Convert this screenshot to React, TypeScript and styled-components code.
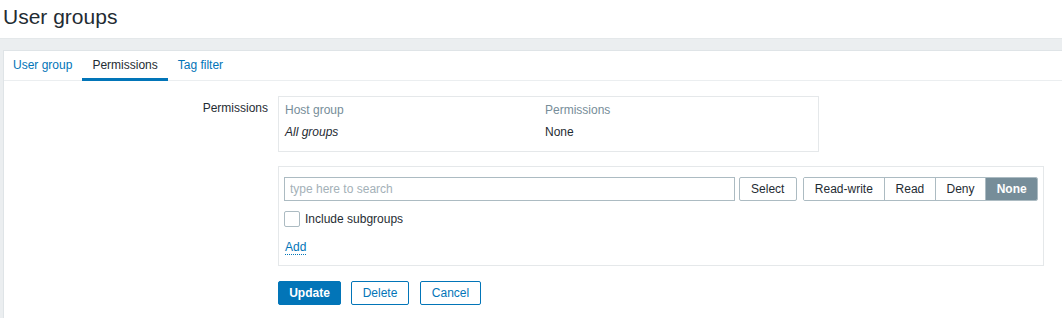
import React from 'react';
import styled, { createGlobalStyle } from 'styled-components';

const GlobalStyle = createGlobalStyle`
  html, body {
    margin: 0;
    padding: 0;
    background: #ffffff;
  }
  body {
    font-family: "Liberation Sans", Arial, sans-serif;
    font-size: 12px;
    color: #1f2c33;
  }
  * { box-sizing: border-box; }
`;

const Page = styled.div`
  display: flex;
  flex-direction: column;
  min-height: 318px;
`;

const Header = styled.header`
  height: 38px;
  padding-left: 3px;
  display: flex;
  align-items: center;
`;

const Title = styled.h1`
  margin: 0;
  font-size: 21px;
  font-weight: normal;
  line-height: 24px;
  color: #1f2c33;
  margin-top: -5px;
`;

const Main = styled.main`
  flex: 1;
  display: flex;
  background: #ebeef0;
  border-top: 1px solid #e4e8ea;
  padding: 11px 0 0 3px;
`;

const Card = styled.section`
  flex: 1;
  background: #ffffff;
  border: 1px solid #dfe4e7;
  border-right: none;
  border-bottom: none;
`;

const TabNav = styled.nav`
  display: flex;
  height: 30px;
  border-bottom: 1px solid #ebeef0;
`;

const Tab = styled.a<{ $active?: boolean }>`
  display: flex;
  align-items: center;
  height: 30px;
  margin-bottom: -1px;
  padding: 0 10px;
  border-bottom: 3px solid ${p => (p.$active ? '#0275b8' : 'transparent')};
  color: ${p => (p.$active ? '#1f2c33' : '#0275b8')};
  text-decoration: none;
  cursor: pointer;
  &:first-child { padding-left: 9px; }
`;

const Form = styled.div`
  display: grid;
  grid-template-columns: 264px 1fr;
  column-gap: 10px;
  row-gap: 14px;
  padding-top: 15px;
  align-items: start;
`;

const Label = styled.label`
  text-align: right;
  padding-top: 5px;
  line-height: 14px;
`;

const TableBox = styled.div`
  width: 541px;
  border: 1px solid #e5e8ea;
  display: grid;
  grid-template-columns: 260px 1fr;
  row-gap: 8px;
  padding: 6px 6px 12px;
  line-height: 14px;
`;

const HeadCell = styled.div`
  color: #768d99;
`;

const Cell = styled.div<{ $italic?: boolean }>`
  font-style: ${p => (p.$italic ? 'italic' : 'normal')};
`;

const EditBox = styled.div`
  width: 766px;
  border: 1px solid #e5e8ea;
  padding: 10px 5px 10px;
  display: flex;
  flex-direction: column;
`;

const SearchRow = styled.div`
  display: flex;
  align-items: center;
`;

const SearchInput = styled.input`
  width: 454px;
  height: 24px;
  border: 1px solid #acbbc2;
  padding: 0 5px;
  font-family: inherit;
  font-size: 12px;
  color: #1f2c33;
  outline: none;
  &::placeholder { color: #a4b1b8; }
`;

const PlainButton = styled.button`
  height: 24px;
  margin-left: 4px;
  padding: 0 10px;
  width: 58px;
  border: 1px solid #acbbc2;
  border-radius: 2px;
  background: #ffffff;
  color: #1f2c33;
  font-family: inherit;
  font-size: 12px;
`;

const Segmented = styled.div`
  display: flex;
  margin-left: 6px;
  height: 24px;
  border: 1px solid #acbbc2;
  border-radius: 2px;
  overflow: hidden;
`;

const Segment = styled.div<{ $active?: boolean; $w: number }>`
  width: ${p => p.$w}px;
  display: flex;
  align-items: center;
  justify-content: center;
  background: ${p => (p.$active ? '#768d99' : '#ffffff')};
  color: ${p => (p.$active ? '#ffffff' : '#1f2c33')};
  font-weight: ${p => (p.$active ? 'bold' : 'normal')};
  & + & { border-left: 1px solid #acbbc2; }
`;

const CheckRow = styled.label`
  display: flex;
  align-items: center;
  margin-top: 10px;
  gap: 5px;
  line-height: 16px;
`;

const CheckBox = styled.span`
  width: 16px;
  height: 16px;
  border: 1px solid #acbbc2;
  border-radius: 2px;
  background: #ffffff;
`;

const AddLink = styled.a`
  align-self: flex-start;
  margin-top: 13px;
  margin-left: 1px;
  color: #0275b8;
  text-decoration: none;
  line-height: 14px;
  border-bottom: 1px dotted #0275b8;
  cursor: pointer;
`;

const Actions = styled.div`
  display: flex;
  gap: 10px;
  padding-top: 1px;
`;

const ActionButton = styled.button<{ $primary?: boolean; $w: number; $gap?: number }>`
  width: ${p => p.$w}px;
  height: 24px;
  margin-left: ${p => p.$gap ?? 0}px;
  border: 1px solid #0275b8;
  border-radius: 2px;
  background: ${p => (p.$primary ? '#0275b8' : '#ffffff')};
  color: ${p => (p.$primary ? '#ffffff' : '#0275b8')};
  font-weight: ${p => (p.$primary ? 'bold' : 'normal')};
  font-family: inherit;
  font-size: 12px;
  padding: 0;
`;

const levels = [
  { name: 'Read-write', w: 81 },
  { name: 'Read', w: 51 },
  { name: 'Deny', w: 51 },
  { name: 'None', w: 52, active: true },
];

const App: React.FC = () => {
  return (
    <Page>
      <GlobalStyle />
      <Header>
        <Title>User groups</Title>
      </Header>
      <Main>
        <Card>
          <TabNav>
            <Tab>User group</Tab>
            <Tab $active>Permissions</Tab>
            <Tab>Tag filter</Tab>
          </TabNav>
          <Form>
            <Label>Permissions</Label>
            <TableBox>
              <HeadCell>Host group</HeadCell>
              <HeadCell>Permissions</HeadCell>
              <Cell $italic>All groups</Cell>
              <Cell>None</Cell>
            </TableBox>

            <div />
            <EditBox>
              <SearchRow>
                <SearchInput placeholder="type here to search" />
                <PlainButton>Select</PlainButton>
                <Segmented>
                  {levels.map(l => (
                    <Segment key={l.name} $w={l.w} $active={l.active}>
                      {l.name}
                    </Segment>
                  ))}
                </Segmented>
              </SearchRow>
              <CheckRow>
                <CheckBox />
                Include subgroups
              </CheckRow>
              <AddLink>Add</AddLink>
            </EditBox>

            <div />
            <Actions>
              <ActionButton $primary $w={63}>Update</ActionButton>
              <ActionButton $w={58}>Delete</ActionButton>
              <ActionButton $w={61} $gap={1}>Cancel</ActionButton>
            </Actions>
          </Form>
        </Card>
      </Main>
    </Page>
  );
};

export default App;
